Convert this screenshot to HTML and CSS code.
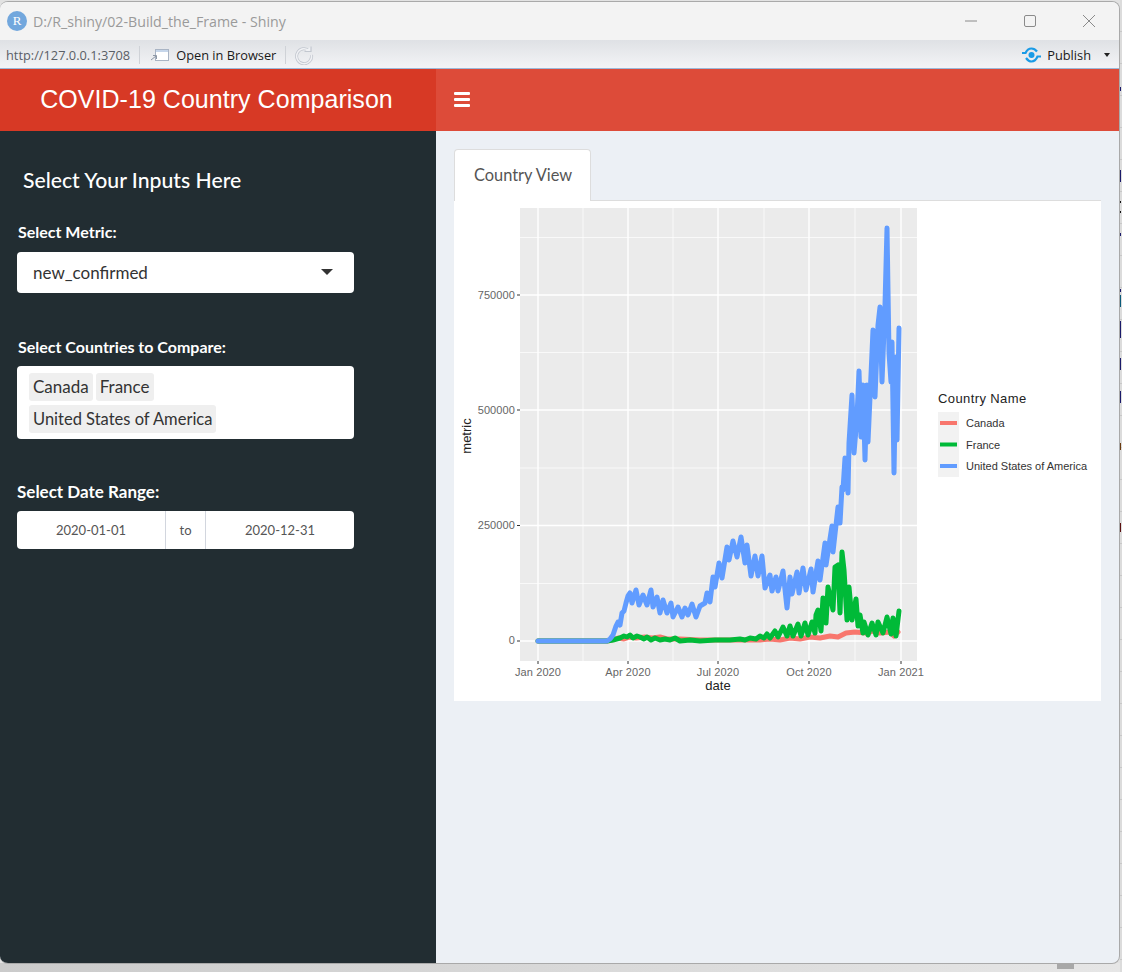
FILE: index.html
```html
<!DOCTYPE html>
<html lang="en">
<head>
    <meta charset="UTF-8">
    <title>D:/R_shiny/02-Build_the_Frame - Shiny</title>
    <link rel="stylesheet" href="styles.css">
</head>
<body>

    <div class="edge-strip">
        <i class="mark m1"></i><i class="mark m2"></i><i class="mark m3"></i><i class="mark m4"></i>
        <i class="mark m5"></i><i class="mark m6"></i><i class="mark m7"></i><i class="mark m8"></i>
        <i class="mark m9"></i><i class="mark m10"></i><i class="mark m11"></i><i class="mark m12"></i>
    </div>
    <div class="bottom-strip">
        <i class="scroll-thumb"></i>
    </div>

    <div class="window">
        <div class="titlebar">
            <span class="r-icon">R</span>
            <span class="title-text">D:/R_shiny/02-Build_the_Frame - Shiny</span>
            <div class="win-buttons">
                <svg width="14" height="14" viewBox="0 0 14 14"><path d="M1 7h12" stroke="#8a8a8a" stroke-width="1"/></svg>
                <svg width="14" height="14" viewBox="0 0 14 14"><rect x="1.5" y="1.5" width="11" height="11" rx="1.5" fill="none" stroke="#8a8a8a"/></svg>
                <svg width="14" height="14" viewBox="0 0 14 14"><path d="M1 1l12 12M13 1L1 13" stroke="#8a8a8a" stroke-width="1"/></svg>
            </div>
        </div>

        <div class="toolbar">
            <span class="url">http://127.0.0.1:3708</span>
            <span class="tool-sep"></span>
            <svg class="open-icon" width="20" height="14" viewBox="0 0 20 14">
                <rect x="5.5" y="1.5" width="13" height="11" fill="#fff" stroke="#a9b4c4"/>
                <rect x="6" y="2" width="12" height="2" fill="#c6d6ea"/>
                <path d="M1 12l5-4M3 7.5h3.5V11" fill="none" stroke="#8d97a5"/>
            </svg>
            <span class="open-text">Open in Browser</span>
            <span class="tool-sep"></span>
            <svg class="reload-icon" width="20" height="20" viewBox="0 0 20 20">
                <path d="M15.5 6A7.5 7.5 0 1 0 17.5 10" fill="none" stroke="#c2c7cf" stroke-width="3"/>
                <path d="M15.5 6A7.5 7.5 0 1 0 17.5 10" fill="none" stroke="#f0f1f4" stroke-width="1.4"/>
                <path d="M10.5 6.5h6.5V1.5" fill="#f0f1f4" stroke="#c2c7cf" stroke-width="1.2"/>
            </svg>
            <svg class="publish-icon" width="21" height="16" viewBox="0 0 21 16">
                <path d="M1 6h3.500C6 2.500 8 1.500 10.500 1.500S14.500 2.500 16 4.500" fill="none" stroke="#1a9be6" stroke-width="2.2"/>
                <path d="M20 9.500h-3.500C15 13 13 14.500 10.500 14.500S6.500 13 5 11" fill="none" stroke="#1a9be6" stroke-width="2.2"/>
                <circle cx="10.5" cy="8" r="3" fill="#1a9be6"/>
            </svg>
            <span class="publish-text">Publish</span>
            <span class="publish-caret"></span>
        </div>

        <div class="app">
            <header class="main-header">
                <div class="logo">COVID-19 Country Comparison</div>
                <nav class="navbar">
                    <span class="burger"><i></i><i></i><i></i></span>
                </nav>
            </header>

            <div class="app-body">
                <aside class="sidebar">
                    <h4 class="side-title">Select Your Inputs Here</h4>

                    <div class="field field-metric">
                        <label>Select Metric:</label>
                        <div class="select-box">
                            <span>new_confirmed</span>
                            <span class="caret"></span>
                        </div>
                    </div>

                    <div class="field field-countries">
                        <label>Select Countries to Compare:</label>
                        <div class="multi-box">
                            <span class="chip">Canada</span>
                            <span class="chip">France</span>
                            <span class="chip chip-long">United States of America</span>
                        </div>
                    </div>

                    <div class="field field-dates">
                        <label class="label-big">Select Date Range:</label>
                        <div class="date-range">
                            <span class="date">2020-01-01</span>
                            <span class="date-to">to</span>
                            <span class="date">2020-12-31</span>
                        </div>
                    </div>
                </aside>

                <main class="content">
                    <ul class="tabs">
                        <li class="tab">Country View</li>
                    </ul>
                    <div class="tab-pane">
                        <svg class="plot" width="647" height="500" viewBox="454 201 647 500">
                            <rect x="520" y="208" width="397" height="453" fill="#ebebeb"/>

                            <g stroke="#fff" stroke-width="0.7">
                                <path d="M520 583.5H917M520 468H917M520 352.5H917M520 237.5H917"/>
                                <path d="M583 208V661M673 208V661M764 208V661M855 208V661"/>
                            </g>
                            <g stroke="#fff" stroke-width="1.4">
                                <path d="M520 641H917M520 525.5H917M520 410H917M520 295H917"/>
                                <path d="M538 208V661M628 208V661M718 208V661M809 208V661M901 208V661"/>
                            </g>

                            <g class="series">
                                <polyline stroke="#f8766d" points="538,641 607,641 612,640 618,638 624,639 630,637 636,638 645,637 652,638 660,637 667,639 680,639 700,640 730,640 760,640 770,639 780,640 790,638 800,639 810,637 820,638 830,636 838,637 846,633 855,632 866,633 873,631 880,633 890,632 894,636 898,632"/>
                                <polyline stroke="#00ba38" points="538,641 607,641 613,640 620,638 624,636 627,637 630,635 633,638 637,636 640,637 644,639 647,637 651,640 655,638 660,640 665,639 670,640 675,638 680,641 690,640 700,641 715,640 730,640 740,639 745,640 750,638 756,639 760,636 764,638 767,634 770,638 775,631 778,637 783,627 787,636 790,626 793,636 798,624 801,636 805,623 808,635 812,622 815,633 816,615 818,610 821,631 823,598 826,623 828,587 833,610 835,567 838,565 840,613 842,552 844,570 847,620 849,587 852,620 856,599 858,626 860,615 863,633 864,622 868,635 872,623 876,635 878,622 883,633 887,617 891,634 893,618 896,636 899,611"/>
                                <polyline stroke="#619cff" points="538,641 607,641 610,639 613,635 616,626 618,622 620,625 622,613 624,611 626,603 628,596 630,593 632,603 636,590 639,605 643,595 647,605 651,590 653,607 657,597 660,613 663,600 667,613 671,603 673,617 678,607 682,617 685,608 688,615 692,604 696,617 700,606 705,603 707,593 710,602 713,577 715,587 719,563 722,578 727,547 729,560 733,541 737,557 741,537 745,563 747,545 751,576 755,556 758,576 762,556 765,588 770,575 772,591 776,577 778,591 783,571 787,608 790,577 792,594 797,572 799,593 803,568 806,590 811,569 813,592 818,561 820,580 825,543 826,565 832,526 833,552 838,507 840,523 842,487 843,490 845,458 848,493 849,443 852,395 854,453 857,417 859,371 861,437 863,385 865,460 867,385 868,442 873,330 875,397 878,325 880,307 882,382 885,305 887,228 889,353 891,382 892,342 894,473 896,357 897,440 899,328"/>
                            </g>

                            <g class="tick-marks" stroke="#333" stroke-width="1">
                                <path d="M517 641h3M517 525.5h3M517 410h3M517 295h3"/>
                                <path d="M538 661v3M628 661v3M718 661v3M809 661v3M901 661v3"/>
                            </g>

                            <g class="axis-text" text-anchor="end">
                                <text x="515" y="644">0</text>
                                <text x="515" y="529">250000</text>
                                <text x="515" y="413.5">500000</text>
                                <text x="515" y="298.5">750000</text>
                            </g>
                            <g class="axis-text" text-anchor="middle">
                                <text x="538" y="675.5">Jan 2020</text>
                                <text x="628" y="675.5">Apr 2020</text>
                                <text x="718" y="675.5">Jul 2020</text>
                                <text x="809" y="675.5">Oct 2020</text>
                                <text x="901" y="675.5">Jan 2021</text>
                            </g>
                            <text class="axis-title" x="718" y="690" text-anchor="middle">date</text>
                            <text class="axis-title" transform="translate(471 436) rotate(-90)" text-anchor="middle">metric</text>

                            <text class="legend-title" x="938" y="403">Country Name</text>
                            <rect x="938" y="412" width="21" height="65" fill="#f2f2f2"/>
                            <path d="M940 423h17" stroke="#f8766d" stroke-width="4"/>
                            <path d="M940 444.5h17" stroke="#00ba38" stroke-width="4"/>
                            <path d="M940 466h17" stroke="#619cff" stroke-width="4"/>
                            <g class="legend-text">
                                <text x="966" y="426.5">Canada</text>
                                <text x="966" y="448.5">France</text>
                                <text x="966" y="469.5">United States of America</text>
                            </g>
                        </svg>
                    </div>
                </main>
            </div>
        </div>
    </div>

</body>
</html>
```
FILE: styles.css
```css
html, body {
    height: 100%;
}

body {
    margin: 0;
    background-color: #e2e2e2;
    overflow: hidden;
    font-family: Lato, "Noto Sans", sans-serif;
}

.window {
    position: absolute;
    left: 0;
    top: 1px;
    width: 1119px;
    height: 961px;
    display: flex;
    flex-direction: column;
    background-color: #ecf0f5;
    border: 1px solid #a9a9a9;
    border-left: 0;
    border-radius: 8px;
    overflow: hidden;
}

/* what shows behind the window */
.edge-strip {
    position: absolute;
    left: 1120px;
    top: 0;
    width: 2px;
    height: 972px;
    background: repeating-linear-gradient(#dcdcdc 0, #dcdcdc 31px, #c8c8c8 31px, #c8c8c8 32px);
}

.mark {
    position: absolute;
    left: 0;
    width: 1px;
    height: 12px;
    background-color: #1a1a6a;
}

.m1 { top: 87px; height: 4px; }
.m2 { top: 170px; }
.m3 { top: 201px; height: 2px; background-color: #111; }
.m4 { top: 211px; height: 2px; background-color: #111; }
.m5 { top: 233px; height: 3px; }
.m6 { top: 289px; height: 3px; }
.m7 { top: 295px; background-color: #0a5a7a; }
.m8 { top: 321px; height: 17px; }
.m9 { top: 358px; }
.m10 { top: 391px; }
.m11 { top: 443px; height: 7px; background-color: #6a3a10; }
.m12 { top: 523px; height: 9px; background-color: #5a1010; }

.bottom-strip {
    position: absolute;
    left: 0;
    top: 963px;
    width: 1120px;
    height: 9px;
    background: linear-gradient(to right, #cbcbcb, #e6e6e6);
}

.scroll-thumb {
    position: absolute;
    left: 1057px;
    top: 0;
    width: 17px;
    height: 6px;
    background-color: #a8a8a8;
}

/* window chrome */
.titlebar {
    height: 38px;
    flex-shrink: 0;
    display: flex;
    align-items: center;
    padding-left: 7px;
    background-color: #f3f3f3;
}

.r-icon {
    width: 20px;
    height: 20px;
    border-radius: 50%;
    background-color: #72a7dd;
    color: #fff;
    font-family: "Liberation Serif", serif;
    font-size: 13px;
    line-height: 20px;
    text-align: center;
}

.title-text {
    margin-left: 6px;
    font-family: "Open Sans", sans-serif;
    font-size: 14.2px;
    color: #9a9a9a;
}

.win-buttons {
    margin-left: auto;
    margin-right: 23px;
    display: flex;
    gap: 45px;
}

.toolbar {
    height: 29px;
    flex-shrink: 0;
    display: flex;
    align-items: center;
    padding: 1px 0 0 6px;
    background: linear-gradient(#dfe1e5, #f3f4f6);
    border-bottom: 1px solid #9db8d8;
    box-sizing: border-box;
    font-family: "Open Sans", sans-serif;
    font-size: 12.8px;
}

.url {
    color: #5a5f66;
}

.tool-sep {
    width: 1px;
    height: 18px;
    margin: 0 10px 0 9px;
    background-color: #cfd2d7;
}

.open-text {
    margin-left: 6px;
    color: #1a1a1a;
}

.reload-icon {
    margin-left: -2px;
}

.publish-icon {
    margin-left: auto;
}

.publish-text {
    margin-left: 5px;
    color: #1a1a1a;
}

.publish-caret {
    margin: 0 9px 0 13px;
    border-top: 4px solid #222;
    border-left: 3.5px solid transparent;
    border-right: 3.5px solid transparent;
}

/* shiny dashboard */
.app {
    flex: 1;
    display: flex;
    flex-direction: column;
    min-height: 0;
}

.main-header {
    height: 62px;
    display: flex;
    flex-shrink: 0;
}

.logo {
    width: 436px;
    flex-shrink: 0;
    padding-right: 3px;
    box-sizing: border-box;
    background-color: #d73925;
    color: #fff;
    font-family: "Liberation Sans", Arial, sans-serif;
    font-size: 25px;
    letter-spacing: 0.04px;
    line-height: 61px;
    text-align: center;
}

.navbar {
    flex: 1;
    display: flex;
    align-items: center;
    padding-bottom: 1px;
    background-color: #dd4b39;
}

.burger {
    margin-left: 18px;
    display: flex;
    flex-direction: column;
    gap: 3px;
}

.burger i {
    display: block;
    width: 16px;
    height: 3px;
    border-radius: 1px;
    background-color: #fff;
}

.app-body {
    flex: 1;
    display: flex;
    min-height: 0;
}

.sidebar {
    width: 436px;
    flex-shrink: 0;
    padding: 0 82px 0 17px;
    box-sizing: border-box;
    background-color: #222d32;
    color: #fff;
}

.side-title {
    margin: 36px 0 0 6px;
    font-size: 21.2px;
    font-weight: 500;
    line-height: 26px;
}

.field label {
    display: block;
    margin-left: 1px;
    font-size: 16px;
    font-weight: 700;
    line-height: 18px;
}

.field-metric {
    margin-top: 30px;
}

.field-countries {
    margin-top: 45px;
}

.field-dates {
    margin-top: 44px;
}

.field .label-big {
    margin-left: 0;
    font-size: 17px;
}

.select-box {
    height: 41px;
    margin-top: 11px;
    padding: 0 21px 1px 16px;
    display: flex;
    align-items: center;
    justify-content: space-between;
    box-sizing: border-box;
    border-radius: 4px;
    background-color: #fff;
    color: #333;
    font-size: 17px;
}

.caret {
    border-top: 6px solid #333;
    border-left: 6px solid transparent;
    border-right: 6px solid transparent;
}

.multi-box {
    height: 73px;
    margin-top: 10px;
    padding: 7px 60px 0 12px;
    display: flex;
    flex-wrap: wrap;
    align-content: flex-start;
    gap: 4px 3px;
    box-sizing: border-box;
    border-radius: 4px;
    background-color: #fff;
}

.chip {
    height: 28px;
    padding: 0 4px;
    border-radius: 3px;
    background-color: #efefef;
    color: #333;
    font-size: 17px;
    line-height: 28px;
}

.chip-long {
    font-size: 16.5px;
}

.date-range {
    height: 38px;
    margin-top: 10px;
    display: flex;
    border-radius: 4px;
    overflow: hidden;
    background-color: #fff;
    color: #555;
    font-size: 13px;
    line-height: 38px;
    text-align: center;
}

.date {
    flex: 1;
}

.date-to {
    width: 39px;
    border-left: 1px solid #d2d6de;
    border-right: 1px solid #d2d6de;
}

.content {
    flex: 1;
    padding: 18px 18px 0;
}

.tabs {
    list-style: none;
    margin: 0;
    padding: 0;
    display: flex;
    border-bottom: 1px solid #ddd;
}

.tab {
    height: 52px;
    margin-bottom: -1px;
    padding: 0 18px 0 19px;
    box-sizing: border-box;
    border: 1px solid #ddd;
    border-bottom: 0;
    border-radius: 4px 4px 0 0;
    background-color: #fff;
    color: #555;
    font-size: 16.4px;
    line-height: 50px;
}

.tab-pane {
    height: 500px;
    background-color: #fff;
}

.plot {
    display: block;
}

.series polyline {
    fill: none;
    stroke-width: 5;
    stroke-linejoin: round;
    stroke-linecap: round;
}

.axis-text {
    font-family: "Liberation Sans", Arial, sans-serif;
    font-size: 11px;
    letter-spacing: 0.1px;
    fill: #666;
}

.axis-title {
    font-family: "Liberation Sans", Arial, sans-serif;
    font-size: 13px;
    fill: #222;
}

.legend-title {
    font-family: "Liberation Sans", Arial, sans-serif;
    font-size: 13px;
    letter-spacing: 0.4px;
    fill: #222;
}

.legend-text {
    font-family: "Liberation Sans", Arial, sans-serif;
    font-size: 11px;
    fill: #333;
}
```
